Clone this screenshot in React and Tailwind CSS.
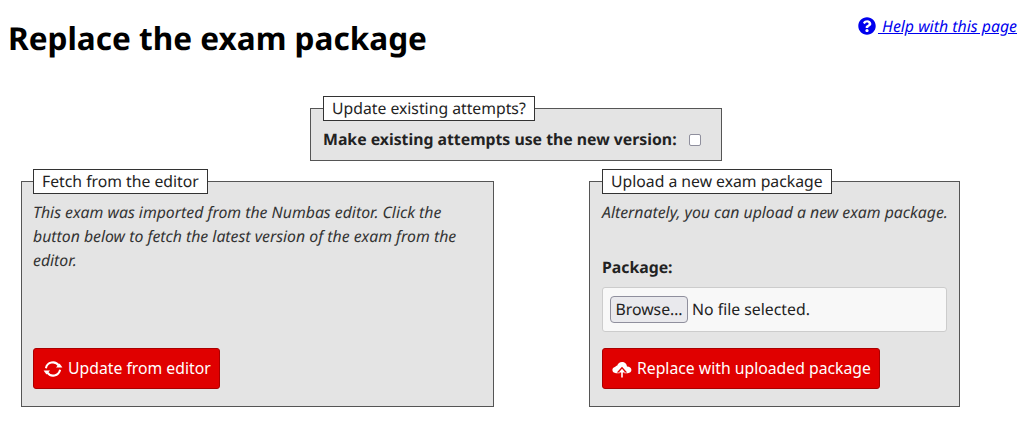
import React from "react";

function Sync() {
  return (
    <svg width="20" height="18" viewBox="0 0 20 18" className="shrink-0" fill="none">
      <path d="M2.9 8.2A7.1 7.1 0 0 1 15.8 5.6" stroke="white" strokeWidth="2" />
      <path d="M17.1 9.8A7.1 7.1 0 0 1 4.2 12.4" stroke="white" strokeWidth="2" />
      <path d="M13 7.4L19.4 7.4L16.6 3.6z" fill="white" />
      <path d="M.6 10.6L7 10.6L3.4 14.4z" fill="white" />
    </svg>
  );
}

function CloudUpload() {
  return (
    <svg width="20" height="18" viewBox="0 0 20 18" className="shrink-0">
      <path d="M4 13.2C1.8 13.2.4 11.8.4 10.1c0-1.6 1.2-2.9 2.8-3 .2-.9 1-1.5 1.9-1.4C5.9 3.5 7.8 2 10 2c2.7 0 4.9 2 5 4.6 2.3-.1 4.4 1.4 4.4 3.5 0 1.8-1.5 3.1-3.6 3.1z" fill="white" />
      <path d="M10 6.8L4.8 12.6H7.6V17.4H12.4V12.6H15.2z" fill="#e00000" />
      <path d="M10 8.8L6.8 12.4H9.2V17.6H10.8V12.4H13.2z" fill="white" />
    </svg>
  );
}

function HelpIcon() {
  return (
    <svg width="18" height="18" viewBox="0 0 512 512" fill="#0000ee" className="shrink-0">
      <path d="M504 256c0 136.997-111.043 248-248 248S8 392.997 8 256C8 119.083 119.043 8 256 8s248 111.083 248 248zM262.655 90c-54.497 0-89.255 22.957-116.549 63.758-3.536 5.286-2.353 12.415 2.715 16.258l34.699 26.31c5.205 3.947 12.621 3.008 16.665-2.122 17.864-22.658 30.113-35.797 57.303-35.797 20.429 0 45.698 13.148 45.698 32.958 0 14.976-12.363 22.667-32.534 33.976C247.128 238.528 216 254.941 216 296v4c0 6.627 5.373 12 12 12h56c6.627 0 12-5.373 12-12v-1.333c0-28.462 83.186-29.647 83.186-106.667 0-58.002-60.165-102-116.531-102zM256 338c-25.365 0-46 20.635-46 46 0 25.364 20.635 46 46 46s46-20.636 46-46c0-25.365-20.635-46-46-46z" />
    </svg>
  );
}

function Box({ title, className, children }) {
  return (
    <fieldset className={"min-w-0 border border-[#555] bg-[#e4e4e4] " + className}>
      <legend className="h-[25px] border border-[#333] bg-white px-2 text-[15.75px] leading-[23px] text-[#222]">
        {title}
      </legend>
      {children}
    </fieldset>
  );
}

function RedButton({ icon, children }) {
  return (
    <button className="flex h-[41px] items-center gap-[5px] rounded-[3px] border border-[#a00] bg-[#e00000] pl-[9px] pr-[8px] text-[15.75px] text-[#fff]">
      {icon}
      <span>{children}</span>
    </button>
  );
}

export default function App() {
  return (
    <div className="h-[426px] w-[1024px] overflow-hidden bg-white font-['Noto_Sans',sans-serif] text-[15.8px] text-black [text-rendering:geometricPrecision]">
      <div className="flex items-start justify-between pl-2 pr-[7px]">
        <h1 className="mt-[17px] text-[31.55px] font-bold leading-[44px]">Replace the exam package</h1>
        <a href="#" className="mt-[15px] flex items-center gap-[2px] text-[15.85px] italic leading-[22px] text-[#0000ee] underline">
          <HelpIcon />
          <span className="whitespace-pre"> Help with this page</span>
        </a>
      </div>

      <div className="mt-[35px] flex justify-center pl-[8px]">
        <Box title="Update existing attempts?" className="h-[65px] w-[412px] px-3">
          <div className="flex h-[36px] items-center pt-[1px]">
            <span className="font-bold text-[#222]">Make existing attempts use the new version:</span>
            <span className="ml-[12px] h-[12px] w-[12px] rounded-[2px] border border-[#8f8f9d] bg-white" />
          </div>
        </Box>
      </div>

      <div className="mt-[8px] flex items-start pl-[21px]">
        <Box title="Fetch from the editor" className="h-[238px] w-[473px] flex-none pl-[11px] pr-3">
          <div className="flex h-[213px] flex-col">
            <p className="mt-[6px] italic leading-[24px] text-[#333]">
              This exam was imported from the Numbas editor. Click the button below to fetch the latest version of the exam from the editor.
            </p>
            <div className="mb-[18px] mt-auto flex">
              <RedButton icon={<Sync />}>Update from editor</RedButton>
            </div>
          </div>
        </Box>

        <Box title="Upload a new exam package" className="ml-[95px] h-[238px] w-[371px] flex-none px-3">
          <div className="flex h-[213px] flex-col">
            <p className="mt-[6px] whitespace-nowrap italic leading-[24px] text-[#333]">
              Alternately, you can upload a new exam package.
            </p>
            <label className="mt-[31px] font-bold leading-[24px] text-[#222]">Package:</label>
            <div className="mt-[8px] flex h-[45px] items-center rounded-[3px] border border-[#ccc] bg-[#f8f8f8] pl-[7px] pr-2">
              <span className="flex h-[27px] w-[78px] items-center justify-center rounded-[4px] border border-[#8f8f9d] bg-[#e9e9ed] text-[#222]">Browse…</span>
              <span className="ml-[4px] text-[#222]">No file selected.</span>
            </div>
            <div className="mt-[16px] flex">
              <RedButton icon={<CloudUpload />}>Replace with uploaded package</RedButton>
            </div>
          </div>
        </Box>
      </div>
    </div>
  );
}
